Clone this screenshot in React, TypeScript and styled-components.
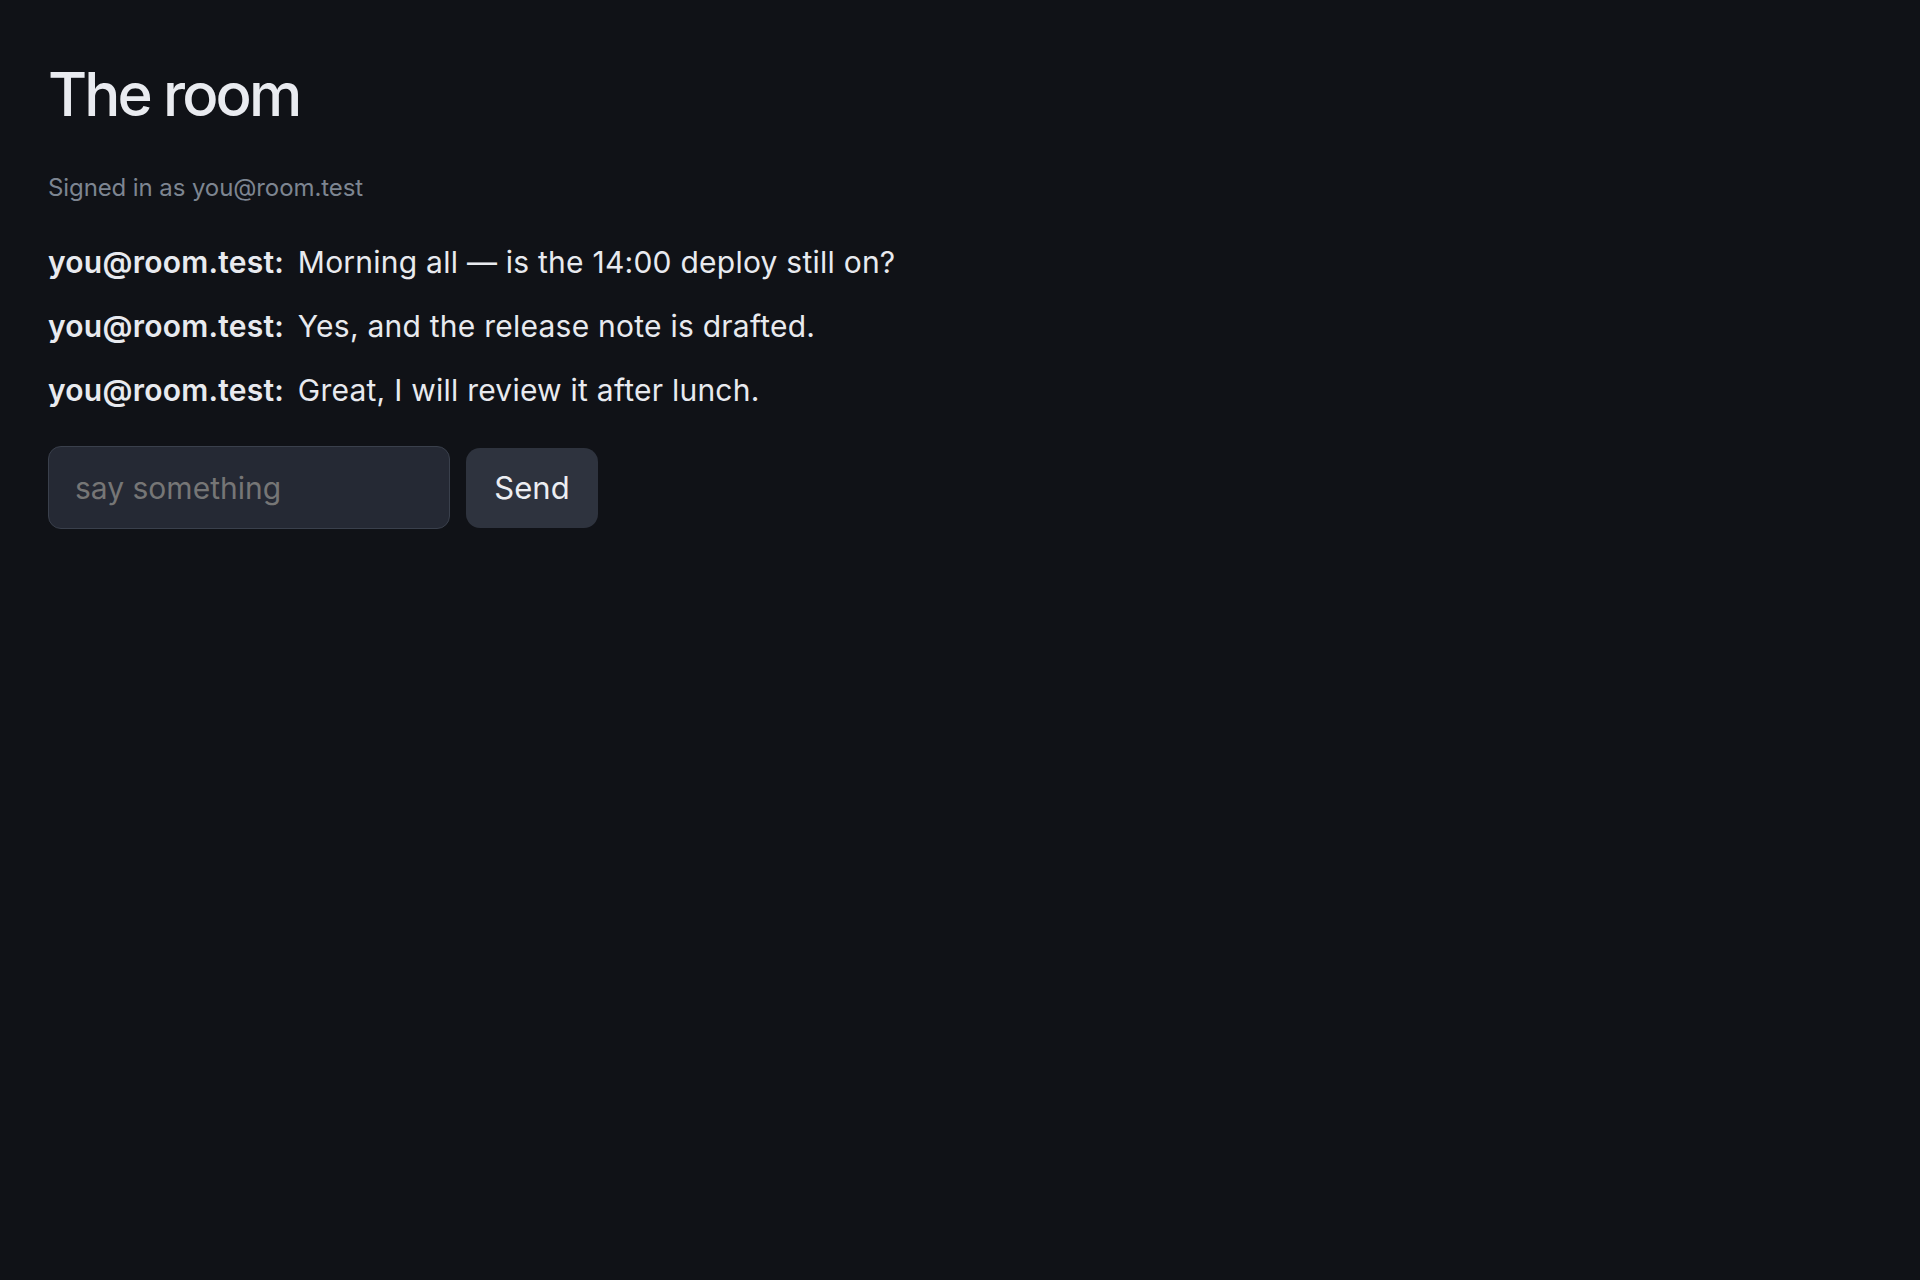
import React from "react";
import styled, { createGlobalStyle } from "styled-components";

const Global = createGlobalStyle`
  html, body {
    margin: 0;
    padding: 0;
    background: #101217;
  }
  body {
    font-family: Inter, "Noto Sans", "Liberation Sans", sans-serif;
    color: #e8eaef;
    min-height: 1280px;
  }
`;

const Page = styled.main`
  padding: 58px 48px 48px;
  display: flex;
  flex-direction: column;
  align-items: flex-start;
`;

const Title = styled.h1`
  margin: 0;
  font-size: 60px;
  line-height: 72px;
  font-weight: 500;
  letter-spacing: -0.048em;
  color: #e9ebf0;
`;

const Subtitle = styled.p`
  margin: 40px 0 0;
  font-size: 24px;
  line-height: 36px;
  letter-spacing: -0.004em;
  color: #7d8591;
`;

const Messages = styled.ul`
  list-style: none;
  margin: 34px 0 0;
  padding: 0;
  display: flex;
  flex-direction: column;
  gap: 19px;
`;

const Message = styled.li`
  font-size: 30px;
  line-height: 45px;
  letter-spacing: 0.008em;
  color: #e8eaef;
`;

const Author = styled.strong`
  font-weight: 600;
  margin-right: 5px;
`;

const Composer = styled.form`
  margin-top: 33px;
  display: flex;
  align-items: center;
  gap: 16px;
`;

const Input = styled.input`
  box-sizing: border-box;
  width: 402px;
  height: 83px;
  padding: 0 26px;
  border: 1.5px solid #3a404c;
  border-radius: 13px;
  background: #252934;
  color: #e8eaef;
  font-family: inherit;
  font-size: 30px;
  outline: none;
  &::placeholder {
    color: #767676;
  }
`;

const Button = styled.button`
  box-sizing: border-box;
  width: 132px;
  height: 80px;
  border: none;
  border-radius: 14px;
  background: #2e333e;
  color: #eceef2;
  font-family: inherit;
  font-size: 31px;
  cursor: pointer;
`;

const messages = [
  "Morning all — is the 14:00 deploy still on?",
  "Yes, and the release note is drafted.",
  "Great, I will review it after lunch.",
];

export default function App() {
  return (
    <>
      <Global />
      <Page>
        <Title>The room</Title>
        <Subtitle>Signed in as you@room.test</Subtitle>
        <Messages>
          {messages.map((m, i) => (
            <Message key={i}>
              <Author>you@room.test:</Author> {m}
            </Message>
          ))}
        </Messages>
        <Composer onSubmit={(e) => e.preventDefault()}>
          <Input placeholder="say something" />
          <Button type="submit">Send</Button>
        </Composer>
      </Page>
    </>
  );
}
